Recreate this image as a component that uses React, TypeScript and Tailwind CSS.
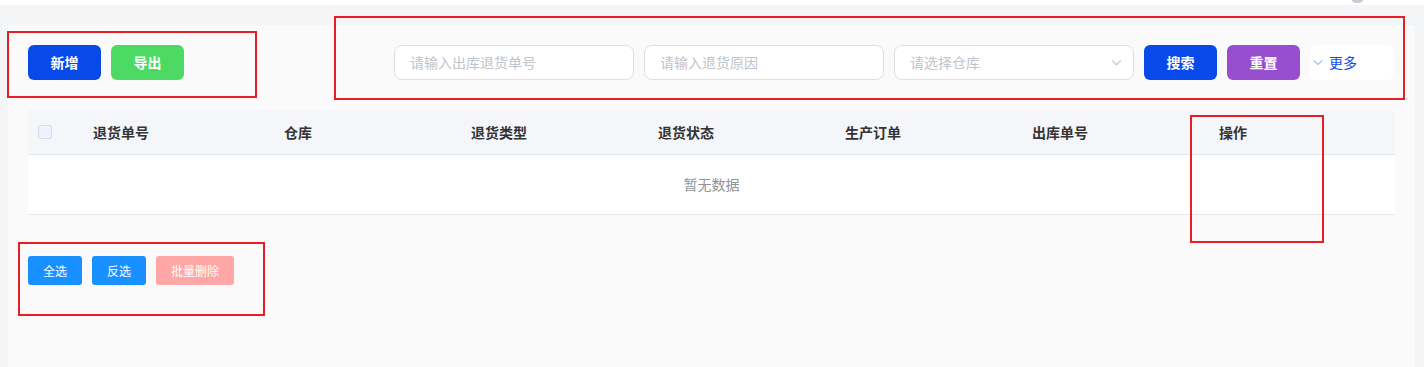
const columns = [
  { label: '退货单号', width: 'w-[191px]' },
  { label: '仓库', width: 'w-[187px]' },
  { label: '退货类型', width: 'w-[187px]' },
  { label: '退货状态', width: 'w-[187px]' },
  { label: '生产订单', width: 'w-[187px]' },
  { label: '出库单号', width: 'w-[187px]' },
  { label: '操作', width: 'flex-1' },
];

function Chevron({ className }: { className?: string }) {
  return (
    <svg viewBox="0 0 12 8" className={className} fill="none" stroke="currentColor" strokeWidth="1.2">
      <path d="M1 1.5l5 5 5-5" />
    </svg>
  );
}

function Mark({ className }: { className: string }) {
  return <div className={`absolute border-2 border-[#ea1c24] pointer-events-none ${className}`} />;
}

export default function App() {
  return (
    <div
      className="relative w-[1424px] h-[367px] overflow-hidden bg-[#f4f5f7] text-[#303133]"
      style={{ fontFamily: '"Noto Sans CJK SC", "Noto Sans", sans-serif' }}
    >
      <div className="h-[5px] bg-white overflow-hidden">
        <div className="ml-[1351px] -mt-[8px] w-[13px] h-[11px] rounded-full bg-[#c9cbcf]" />
      </div>

      <div className="pt-[20px] pl-[8px] pr-[9px]">
        <div className="h-[342px] bg-[#fafafa] px-[20px] pt-[20px]">
          {/* toolbar */}
          <div className="flex items-center justify-between">
            <div className="flex gap-[10px]">
              <button className="w-[73px] h-[35px] rounded-[6px] bg-[#0849ea] text-white text-[14px] font-bold">
                新增
              </button>
              <button className="w-[73px] h-[35px] rounded-[6px] bg-[#4cd964] text-white text-[14px] font-bold">
                导出
              </button>
            </div>
            <div className="flex items-center gap-[10px] pr-px">
              <div className="w-[240px] h-[35px] rounded-[8px] border border-[#dcdfe6] bg-white flex items-center px-[15px] text-[14px] text-[#c0c4cc]">
                请输入出库退货单号
              </div>
              <div className="w-[240px] h-[35px] rounded-[8px] border border-[#dcdfe6] bg-white flex items-center px-[15px] text-[14px] text-[#c0c4cc]">
                请输入退货原因
              </div>
              <div className="w-[240px] h-[35px] rounded-[8px] border border-[#dcdfe6] bg-white flex items-center justify-between pl-[15px] pr-[11px] text-[14px] text-[#c0c4cc]">
                <span>请选择仓库</span>
                <Chevron className="w-[11px] h-[7px] text-[#c0c4cc]" />
              </div>
              <button className="w-[73px] h-[35px] rounded-[6px] bg-[#0849ea] text-white text-[14px] font-bold">
                搜索
              </button>
              <button className="w-[73px] h-[35px] rounded-[6px] bg-[#974fcf] text-white text-[14px] font-bold">
                重置
              </button>
              <div className="w-[84px] h-[35px] rounded-[8px] bg-white flex items-center pl-[3px] gap-[6px] text-[14px] text-[#0b4de8]">
                <Chevron className="w-[10px] h-[7px] text-[#5d8ef0]" />
                <span>更多</span>
              </div>
            </div>
          </div>

          {/* table */}
          <div className="mt-[30px]">
            <div className="flex h-[45px] items-center bg-[#f5f6fa] border-b border-[#e2e7ee] text-[14px] font-bold text-[#333]">
              <div className="w-[55px] pl-[10px] flex items-center">
                <div className="w-[14px] h-[14px] rounded-[2px] border border-[#d8dce5] bg-[#edf2fd]" />
              </div>
              {columns.map((c) => (
                <div key={c.label} className={`${c.width} pl-[10px]`}>
                  {c.label}
                </div>
              ))}
            </div>
            <div className="h-[60px] bg-white border-b border-[#e4e9f0] flex items-center justify-center text-[14px] text-[#909399]">
              暂无数据
            </div>
          </div>

          {/* batch actions */}
          <div className="mt-[41px] flex gap-[10px]">
            <button className="w-[54px] h-[29px] rounded-[3px] bg-[#1890ff] text-white text-[12px]">全选</button>
            <button className="w-[54px] h-[29px] rounded-[3px] bg-[#1890ff] text-white text-[12px]">反选</button>
            <button className="w-[78px] h-[29px] rounded-[3px] bg-[#ffa6a6] text-white text-[12px]">批量删除</button>
          </div>
        </div>
      </div>

      <Mark className="left-[7px] top-[31px] w-[250px] h-[67px]" />
      <Mark className="left-[334px] top-[16px] w-[1071px] h-[84px]" />
      <Mark className="left-[1190px] top-[115px] w-[134px] h-[128px]" />
      <Mark className="left-[18px] top-[242px] w-[247px] h-[74px]" />
    </div>
  );
}
